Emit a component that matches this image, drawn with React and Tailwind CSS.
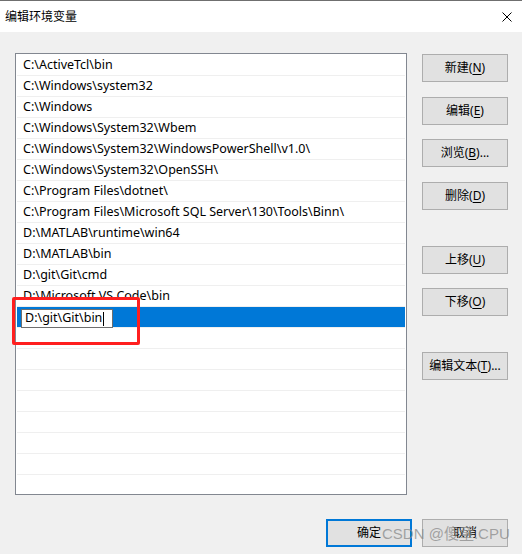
import React from "react";

const paths = [
  "C:\\ActiveTcl\\bin",
  "C:\\Windows\\system32",
  "C:\\Windows",
  "C:\\Windows\\System32\\Wbem",
  "C:\\Windows\\System32\\WindowsPowerShell\\v1.0\\",
  "C:\\Windows\\System32\\OpenSSH\\",
  "C:\\Program Files\\dotnet\\",
  "C:\\Program Files\\Microsoft SQL Server\\130\\Tools\\Binn\\",
  "D:\\MATLAB\\runtime\\win64",
  "D:\\MATLAB\\bin",
  "D:\\git\\Git\\cmd",
  "D:\\Microsoft VS Code\\bin",
];

const FONT = { fontFamily: '"Noto Sans", "Noto Sans CJK SC", sans-serif' };

function Btn({ label, k, tail = "", className = "" }) {
  return (
    <div
      className={`w-[86px] h-[28px] bg-[#e1e1e1] border border-[#adadad] flex items-center justify-center text-[12px] text-black ${className}`}
    >
      <span>
        {label}(<span className="underline underline-offset-2">{k}</span>){tail}
      </span>
    </div>
  );
}

export default function App() {
  const empties = Array.from({ length: 8 });
  return (
    <div
      className="relative w-[522px] h-[554px] bg-[#f0f0f0] flex flex-col overflow-hidden"
      style={FONT}
    >
      {/* title bar */}
      <div className="h-[32px] bg-white border-t border-[#6f6f6f] flex items-center justify-between pl-[5px] pr-[10px]">
        <span className="text-[12px] text-black">编辑环境变量</span>
        <svg width="10" height="10" viewBox="0 0 10 10">
          <path d="M0.5 0.5 L9.5 9.5 M9.5 0.5 L0.5 9.5" stroke="#000" strokeWidth="1" />
        </svg>
      </div>

      {/* body */}
      <div className="flex pt-[21px] pl-[15px]">
        <div className="w-[392px] h-[442px] border border-[#828790] bg-white overflow-hidden pt-[1px] px-[1px]">
          {paths.map((p, i) => (
            <div
              key={i}
              className="h-[21px] border-b border-[#efefef] pl-[6px] pt-[1px] flex items-center text-[12.5px] text-black whitespace-nowrap"
            >
              {p}
            </div>
          ))}
          <div className="relative h-[21px] border-b border-[#efefef]">
            <div className="h-[20px] bg-[#0078d7]" />
            <div className="absolute left-[4px] top-[2px] w-[92px] h-[19px] bg-white border border-[#6e6e6e] flex items-center pl-[3px] text-[12.5px] text-black whitespace-nowrap">
              D:\git\Git\bin
              <span className="inline-block w-[1px] h-[14px] bg-black ml-[1px]" />
            </div>
          </div>
          {empties.map((_, i) => (
            <div key={i} className="h-[21px] border-b border-[#efefef]" />
          ))}
        </div>

        <div className="ml-[15px] flex flex-col pt-[1px]">
          <Btn label="新建" k="N" />
          <Btn label="编辑" k="E" className="mt-[15px]" />
          <Btn label="浏览" k="B" tail="..." className="mt-[14px]" />
          <Btn label="删除" k="D" className="mt-[15px]" />
          <Btn label="上移" k="U" className="mt-[36px]" />
          <Btn label="下移" k="O" className="mt-[14px]" />
          <Btn label="编辑文本" k="T" tail="..." className="mt-[36px]" />
        </div>
      </div>

      {/* bottom buttons */}
      <div className="flex justify-end gap-[10px] pr-[14px] mt-[24px]">
        <div className="w-[86px] h-[28px] bg-[#e1e1e1] border-2 border-[#0078d7] flex items-center justify-center text-[12px] text-black">
          确定
        </div>
        <div className="w-[86px] h-[28px] bg-[#e1e1e1] border border-[#adadad] flex items-center justify-center text-[12px] text-black">
          取消
        </div>
      </div>

      {/* red highlight annotation */}
      <div className="absolute left-[12px] top-[297px] w-[128px] h-[48px] border-[3px] border-[#ff1f1f] rounded-[2px] pointer-events-none" />

      {/* watermark */}
      <div
        className="absolute left-[382px] top-[524px] text-[15px] leading-[20px] text-[#8a8a8a]/75 whitespace-nowrap pointer-events-none"
        style={{ fontFamily: '"Liberation Sans", "Noto Sans CJK SC", sans-serif' }}
      >
        CSDN @傻童.CPU
      </div>
    </div>
  );
}
